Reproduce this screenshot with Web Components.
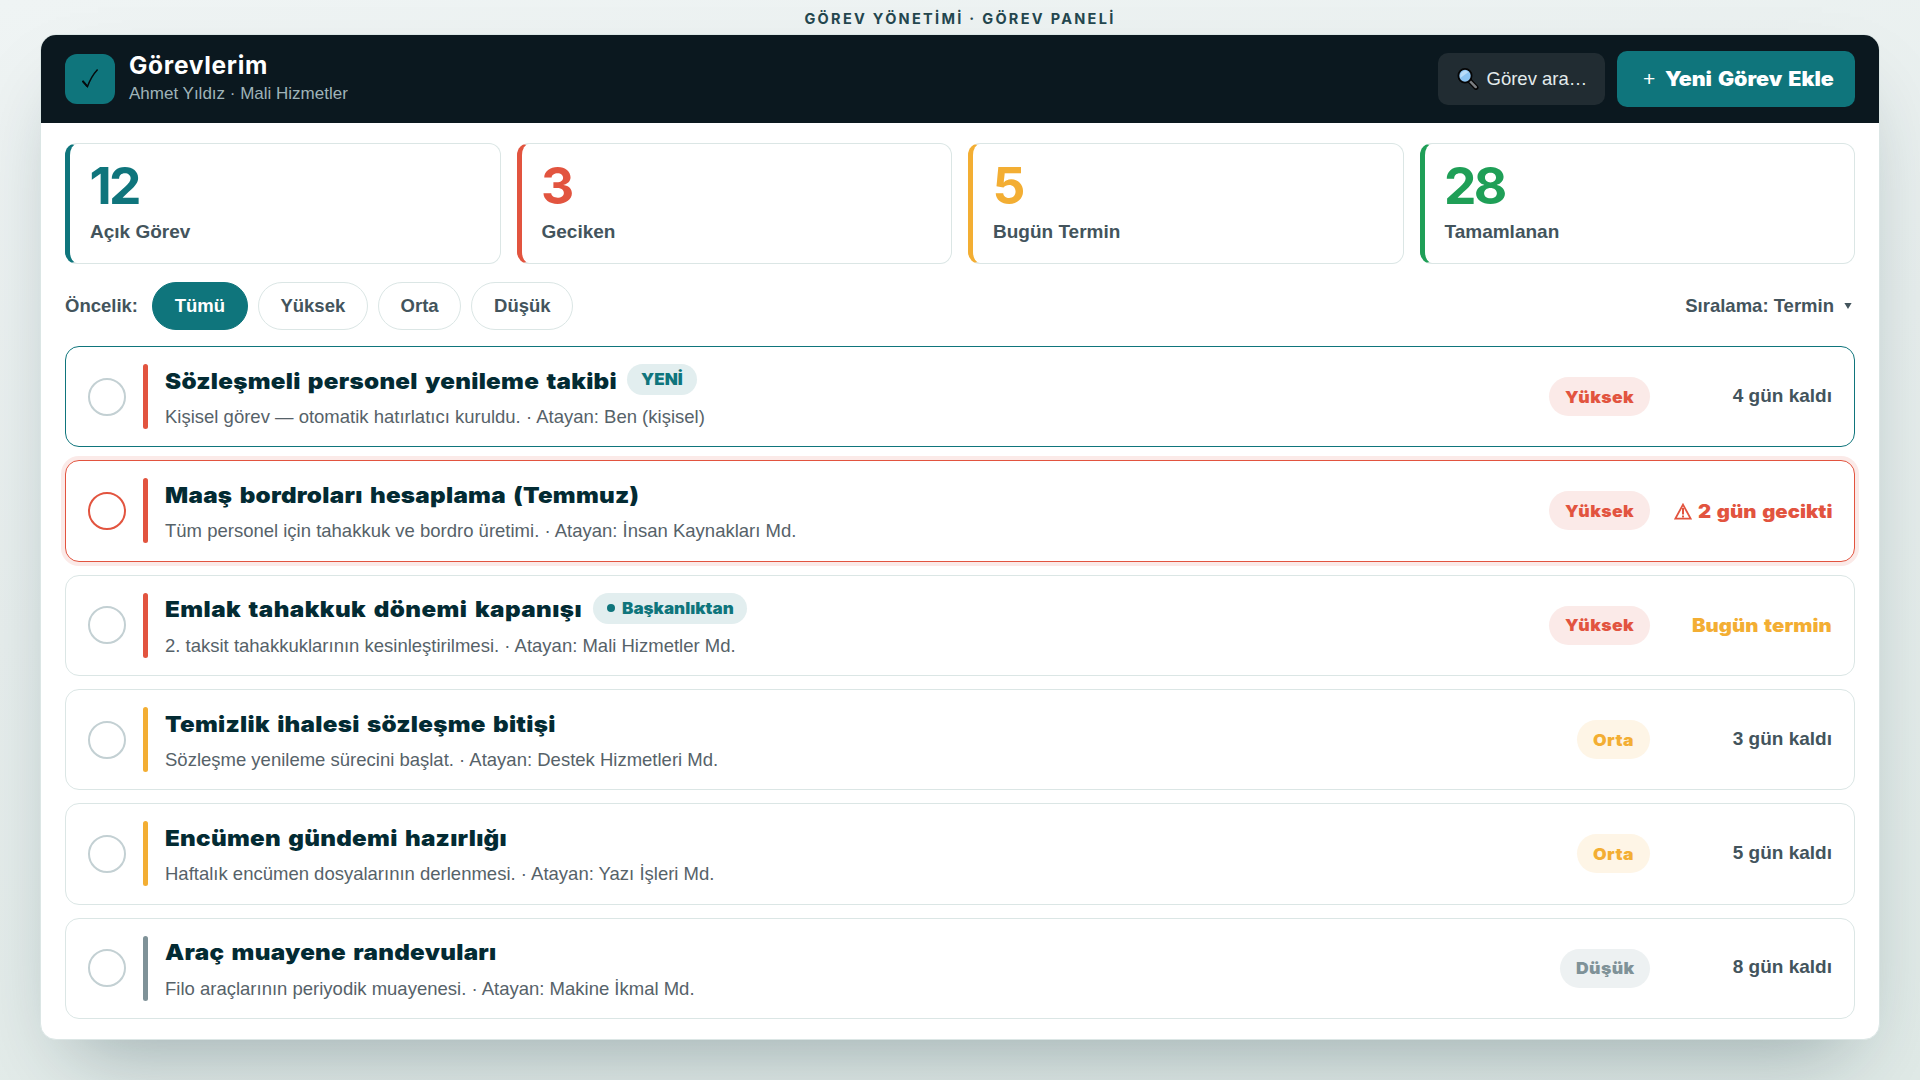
<!DOCTYPE html>
<html lang="tr">
<head>
<meta charset="utf-8">
<title>Görev Paneli</title>
<style>
  :root {
    --teal: #0f757c;
    --ink: #032b33;
    --slate: #43545c;
    --muted: #566269;
    --line: #dbe6e5;
    --red: #e2543f;
    --amber: #f3ae33;
    --green: #1f9f57;
    --gray: #7f9298;
    --sans: "Liberation Sans", Arial, sans-serif;
    --black: Inter, "Liberation Sans", sans-serif;
  }
  html, body { height: 100%; }
  body {
    margin: 0;
    overflow: hidden;
    background: linear-gradient(170deg, #eff4f4 0%, #e7eeed 45%, #e0eae7 100%);
    font-family: var(--sans);
    color: var(--slate);
  }
</style>
</head>
<body>

<task-page heading="GÖREV YÖNETİMİ · GÖREV PANELİ">
  <task-header slot="header" name="Görevlerim" sub="Ahmet Yıldız · Mali Hizmetler" search="Görev ara…" action="Yeni Görev Ekle"></task-header>

  <stat-row slot="stats">
    <stat-card value="12" tone="teal">Açık Görev</stat-card>
    <stat-card value="3" tone="red">Geciken</stat-card>
    <stat-card value="5" tone="amber">Bugün Termin</stat-card>
    <stat-card value="28" tone="green">Tamamlanan</stat-card>
  </stat-row>

  <filter-bar slot="filters" label="Öncelik:" sort="Sıralama: Termin">
    <filter-chip active>Tümü</filter-chip>
    <filter-chip>Yüksek</filter-chip>
    <filter-chip>Orta</filter-chip>
    <filter-chip>Düşük</filter-chip>
  </filter-bar>

  <task-row tone="red" level="Yüksek" due="4 gün kaldı" state="new">
    Sözleşmeli personel yenileme takibi
    <task-badge slot="badge">YENİ</task-badge>
    <span slot="sub">Kişisel görev — otomatik hatırlatıcı kuruldu. · Atayan: Ben (kişisel)</span>
  </task-row>
  <task-row tone="red" level="Yüksek" due="2 gün gecikti" state="late">
    Maaş bordroları hesaplama (Temmuz)
    <span slot="sub">Tüm personel için tahakkuk ve bordro üretimi. · Atayan: İnsan Kaynakları Md.</span>
  </task-row>
  <task-row tone="red" level="Yüksek" due="Bugün termin" state="today" style="--track:0.4px">
    Emlak tahakkuk dönemi kapanışı
    <task-badge slot="badge" dot>Başkanlıktan</task-badge>
    <span slot="sub">2. taksit tahakkuklarının kesinleştirilmesi. · Atayan: Mali Hizmetler Md.</span>
  </task-row>
  <task-row tone="amber" level="Orta" due="3 gün kaldı">
    Temizlik ihalesi sözleşme bitişi
    <span slot="sub">Sözleşme yenileme sürecini başlat. · Atayan: Destek Hizmetleri Md.</span>
  </task-row>
  <task-row tone="amber" level="Orta" due="5 gün kaldı">
    Encümen gündemi hazırlığı
    <span slot="sub">Haftalık encümen dosyalarının derlenmesi. · Atayan: Yazı İşleri Md.</span>
  </task-row>
  <task-row tone="gray" level="Düşük" due="8 gün kaldı">
    Araç muayene randevuları
    <span slot="sub">Filo araçlarının periyodik muayenesi. · Atayan: Makine İkmal Md.</span>
  </task-row>
</task-page>

<script>
/* Sayfa iskeleti: üst başlık + kart */
class TaskPage extends HTMLElement {
  connectedCallback() {
    const root = this.attachShadow({ mode: "open" });
    root.innerHTML = `
      <style>
        :host { display: flex; flex-direction: column; box-sizing: border-box; height: 100vh; padding: 0 40px 40px; }
        h1 {
          margin: 0; height: 34px; text-align: center;
          font: 650 14.5px/37px var(--black); letter-spacing: 2.3px; color: #24474f;
        }
        .card {
          flex: 1; min-height: 0; display: flex; flex-direction: column; box-sizing: border-box;
          border: 1px solid var(--line); border-radius: 16px; background: #fff; overflow: hidden;
          box-shadow: 0 40px 80px -30px rgba(11, 45, 52, 0.34);
        }
        .body { flex: 1; min-height: 0; display: flex; flex-direction: column; padding: 20px 24px; }
        .list { flex: 1; display: flex; flex-direction: column; gap: 13px; margin-top: 16px; }
        .filters { margin-top: 18px; }
      </style>
      <h1>${this.getAttribute("heading")}</h1>
      <div class="card">
        <slot name="header"></slot>
        <div class="body">
          <slot name="stats"></slot>
          <div class="filters"><slot name="filters"></slot></div>
          <div class="list"><slot></slot></div>
        </div>
      </div>
    `;
  }
}

/* Yatayda genişletilmiş metin; kalan yer sağ boşlukla tamamlanır */
class WideText extends HTMLElement {
  connectedCallback() {
    const k = parseFloat(this.getAttribute("k")) || 1.1;
    const root = this.attachShadow({ mode: "open" });
    root.innerHTML = `
      <style>
        :host { display: inline-block; white-space: nowrap; transform: scaleX(${k}); transform-origin: 0 50%; }
      </style>
      <slot></slot>
    `;
    this.style.marginRight = this.offsetWidth * (k - 1) + "px";
  }
}

class TaskHeader extends HTMLElement {
  connectedCallback() {
    const root = this.attachShadow({ mode: "open" });
    root.innerHTML = `
      <style>
        :host {
          display: flex; align-items: center; box-sizing: border-box; height: 88px; flex: none;
          padding: 0 24px; background: #0b181f; color: #fff;
        }
        .logo { width: 50px; height: 50px; border-radius: 12px; background: var(--teal); }
        .logo svg { display: block; }
        .who { flex: 1; margin-left: 14px; padding-bottom: 4px; }
        .name { font: 700 24.5px/30px var(--black); letter-spacing: 0.7px; }
        .sub { margin-top: 4px; font-size: 17px; line-height: 20px; color: #9fb3b8; }
        .search {
          display: flex; align-items: center; gap: 7.5px; box-sizing: border-box; width: 167px; height: 52px;
          padding-left: 19px; border-radius: 10px; background: #212c32; color: #e3ebec; font-size: 18.5px;
        }
        .add {
          display: flex; align-items: center; box-sizing: border-box; width: 238px; height: 56px;
          margin-left: 12px; padding-left: 26px; border-radius: 10px; background: var(--teal);
          font: 900 19.5px/24px var(--black); letter-spacing: 0; word-spacing: 1.5px; white-space: nowrap;
        }
        .plus { width: 22px; font: 400 21px/24px var(--sans); }
      </style>
      <div class="logo">
        <svg width="50" height="50" viewBox="0 0 50 50" fill="none" stroke="#050b0d">
          <path d="M17.4 27 L22.5 32.6 Q26 22.5 32.6 15.4" stroke-width="1.5"/>
          <path d="M17.6 26.9 L22.3 32.4" stroke-width="1.9"/>
        </svg>
      </div>
      <div class="who">
        <div class="name">${this.getAttribute("name")}</div>
        <div class="sub">${this.getAttribute("sub")}</div>
      </div>
      <div class="search">
        <svg width="22" height="22" viewBox="0 0 22 22">
          <path d="M12.6 12.8 L19 19.4" stroke="#050505" stroke-width="5" stroke-linecap="round"/>
          <path d="M13.4 13.6 L18.8 19.1" stroke="#7c7f82" stroke-width="2.4" stroke-linecap="round"/>
          <ellipse cx="8" cy="7.8" rx="6.6" ry="6.9" fill="#8cc4f2" stroke="#050505" stroke-width="1.8"/>
          <path d="M3.2 10 Q2.6 3.4 8.6 2.6 L11.6 4 Z" fill="#b9dcf8"/>
        </svg>
        <span>${this.getAttribute("search")}</span>
      </div>
      <div class="add"><span class="plus">+</span><wide-text>${this.getAttribute("action")}</wide-text></div>
    `;
  }
}

class StatRow extends HTMLElement {
  connectedCallback() {
    const root = this.attachShadow({ mode: "open" });
    root.innerHTML = `
      <style>
        :host { display: grid; grid-template-columns: repeat(4, 1fr); gap: 16px; }
      </style>
      <slot></slot>
    `;
  }
}

class StatCard extends HTMLElement {
  connectedCallback() {
    const root = this.attachShadow({ mode: "open" });
    root.innerHTML = `
      <style>
        :host {
          display: block; box-sizing: border-box; height: 121px; padding: 14px 20px;
          border: 1px solid var(--line); border-left: 5px solid var(--${this.getAttribute("tone")}); border-radius: 12px;
        }
        .num {
          margin-left: -0.5px; font: 680 51.5px/54px var(--black); letter-spacing: -2.8px;
          color: var(--${this.getAttribute("tone")});
        }
        .label { margin-top: 9px; font-size: 19px; line-height: 22px; font-weight: 700; }
      </style>
      <div class="num">${this.getAttribute("value")}</div>
      <div class="label"><slot></slot></div>
    `;
  }
}

class FilterBar extends HTMLElement {
  connectedCallback() {
    const root = this.attachShadow({ mode: "open" });
    root.innerHTML = `
      <style>
        :host { display: flex; align-items: center; height: 48px; gap: 10px; font-size: 18.5px; font-weight: 700; }
        .label { margin-right: 4px; }
        .sort { display: flex; align-items: center; gap: 10px; margin-left: auto; padding-right: 3px; }
      </style>
      <span class="label">${this.getAttribute("label")}</span>
      <slot></slot>
      <span class="sort">${this.getAttribute("sort")}
        <svg width="8" height="6" viewBox="0 0 8 6"><path d="M0.4 0 H7.6 L4 6 Z" fill="#43545c"/></svg>
      </span>
    `;
  }
}

class FilterChip extends HTMLElement {
  connectedCallback() {
    const root = this.attachShadow({ mode: "open" });
    root.innerHTML = `
      <style>
        :host {
          display: flex; align-items: center; box-sizing: border-box; height: 48px; padding: 0 21.7px;
          border: 1px solid var(--line); border-radius: 24px; background: #fff;
        }
        :host([active]) { background: var(--teal); border-color: var(--teal); color: #fff; }
      </style>
      <slot></slot>
    `;
  }
}

class TaskBadge extends HTMLElement {
  connectedCallback() {
    const root = this.attachShadow({ mode: "open" });
    root.innerHTML = `
      <style>
        :host {
          display: flex; align-items: center; gap: 7px; box-sizing: border-box; height: 31px; padding: 0 14px;
          border-radius: 16px; background: #e2eeef; color: var(--teal);
          font: 900 15.5px/31px var(--black);
        }
        i { width: 8px; height: 8px; border-radius: 50%; background: var(--teal); }
      </style>
      ${this.hasAttribute("dot") ? "<i></i>" : ""}<wide-text><slot></slot></wide-text>
    `;
  }
}

/* Görev satırı. state: new | late | today */
class TaskRow extends HTMLElement {
  connectedCallback() {
    const tone = this.getAttribute("tone");
    const state = this.getAttribute("state");
    const soft = { red: "#fbeae8", amber: "#fef5e6", gray: "#edf1f2" }[tone];
    const due = this.getAttribute("due");
    const urgent = state === "late" || state === "today";
    const root = this.attachShadow({ mode: "open" });
    root.innerHTML = `
      <style>
        :host {
          flex: 1; display: flex; align-items: center; box-sizing: border-box; padding: 0 22px;
          border: 1px solid var(--line); border-radius: 14px; background: #fff;
        }
        :host([state="new"]) { border-color: var(--teal); }
        :host([state="late"]) { border-color: var(--red); box-shadow: 0 0 0 4px #fbeae8; }
        .check { box-sizing: border-box; width: 38px; height: 38px; border: 2px solid #c3d0d3; border-radius: 50%; }
        :host([state="late"]) .check { border-color: var(--red); }
        .bar { width: 5px; height: 65px; margin: 0 17px; border-radius: 3px; background: var(--${tone}); }
        .text { flex: 1; height: 65px; }
        .top { display: flex; align-items: center; gap: 10.5px; height: 31px; }
        .title {
          padding-top: 2px; font: 900 22px/28px var(--black); letter-spacing: var(--track, 0.25px); word-spacing: 2px;
          color: var(--ink);
        }
        .sub { margin-top: 11px; font-size: 18.5px; line-height: 21px; color: var(--muted); }
        .pill {
          height: 39px; padding: 0 16px; border-radius: 20px; background: ${soft}; color: var(--${tone});
          font: 900 16px/39px var(--black); letter-spacing: 0.35px;
        }
        .pill wide-text { position: relative; top: 0.5px; }
        .due {
          display: flex; align-items: center; justify-content: flex-end; gap: 6px; width: 182px; padding-bottom: 2px;
          font-size: 19px; font-weight: 700; white-space: nowrap;
        }
        :host([state="late"]) .due, :host([state="today"]) .due {
          font: 900 18.5px/24px var(--black); letter-spacing: 0; word-spacing: 1.5px; color: var(--red);
        }
        :host([state="late"]) .due { padding: 1px 0 0; }
        :host([state="today"]) .due { padding: 0; color: var(--amber); }
      </style>
      <span class="check"></span>
      <span class="bar"></span>
      <div class="text">
        <div class="top"><wide-text class="title"><slot></slot></wide-text><slot name="badge"></slot></div>
        <div class="sub"><slot name="sub"></slot></div>
      </div>
      <span class="pill"><wide-text>${this.getAttribute("level")}</wide-text></span>
      <div class="due">${state === "late" ? `
        <svg width="18" height="17" viewBox="0 0 18 17" fill="none" stroke="#e2543f">
          <path d="M9 1.6 L16.6 15.6 H1.4 Z" stroke-width="1.8"/>
          <path d="M9 5 V11.6 M9 12.4 V14.6" stroke-width="2"/>
        </svg>` : ""}${urgent ? `<wide-text>${due}</wide-text>` : `<span>${due}</span>`}
      </div>
    `;
  }
}

customElements.define("task-page", TaskPage);
customElements.define("task-header", TaskHeader);
customElements.define("stat-row", StatRow);
customElements.define("stat-card", StatCard);
customElements.define("filter-bar", FilterBar);
customElements.define("filter-chip", FilterChip);
customElements.define("task-badge", TaskBadge);
customElements.define("task-row", TaskRow);
customElements.define("wide-text", WideText);
</script>
</body>
</html>
